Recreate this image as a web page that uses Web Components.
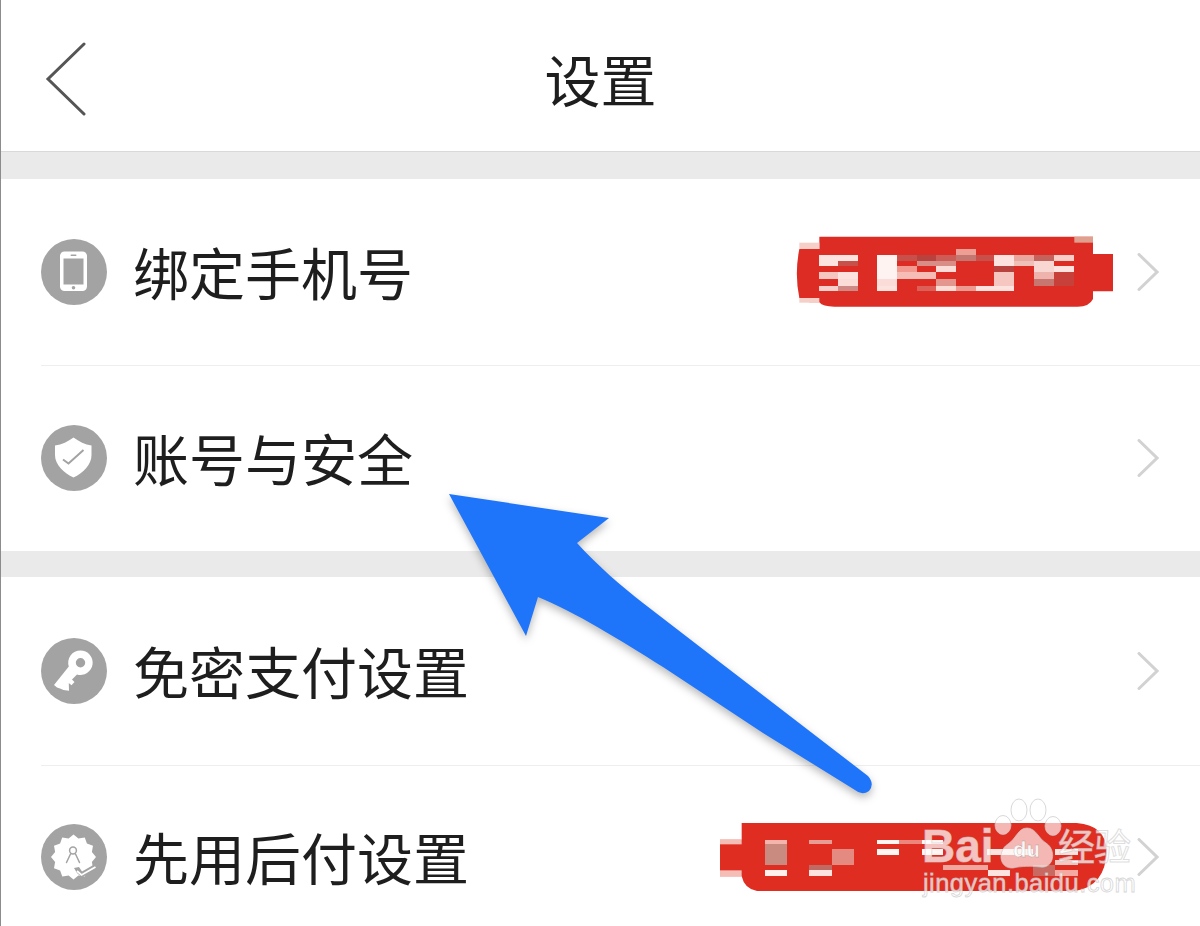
<!DOCTYPE html>
<html lang="zh">
<head>
<meta charset="utf-8">
<title>设置</title>
<style>
    html, body {
        margin: 0;
        padding: 0;
        background-color: #fff;
    }
</style>
</head>
<body>
<settings-page>
    <nav-bar title="设置"></nav-bar>
    <section-gap edge></section-gap>
    <setting-row icon="phone" divider h="187">绑定手机号<redact-block slot="value" kind="phone"></redact-block></setting-row>
    <setting-row icon="shield" h="185">账号与安全</setting-row>
    <section-gap></section-gap>
    <setting-row icon="key" divider h="189">免密支付设置</setting-row>
    <setting-row icon="badge" h="183">先用后付设置<redact-block slot="value" kind="name"></redact-block></setting-row>
    <blue-arrow></blue-arrow>
    <baidu-mark></baidu-mark>
</settings-page>

<script>
const FONT = `"Noto Sans CJK SC", "Noto Sans", sans-serif`;

class SettingsPage extends HTMLElement {
    constructor() {
        super();
        this.attachShadow({ mode: "open" }).innerHTML = `
            <style>
                :host {
                    display: block;
                    position: relative;
                    width: 1200px;
                    height: 926px;
                    box-sizing: border-box;
                    border-left: 1px solid #8c8c8c;
                    overflow: hidden;
                    background-color: #fff;
                    font-family: ${FONT};
                    color: #1e1e1e;
                }
            </style>
            <slot></slot>`;
    }
}

class NavBar extends HTMLElement {
    connectedCallback() {
        this.attachShadow({ mode: "open" }).innerHTML = `
            <style>
                :host {
                    display: grid;
                    grid-template-columns: 1fr auto 1fr;
                    align-items: center;
                    height: 151px;
                    padding-left: 44px;
                    padding-top: 6px;
                    box-sizing: border-box;
                }
                svg { display: block; }
                h1 {
                    margin: 0 0 2px;
                    font-size: 56px;
                    font-weight: 400;
                    line-height: 1;
                    position: relative;
                    left: -22px;
                }
            </style>
            <svg width="42" height="74" viewBox="0 0 42 74" fill="none" stroke="#555" stroke-width="3" stroke-linecap="round" stroke-linejoin="miter">
                <path d="M39 2 L3 37 L39 72"/>
            </svg>
            <h1>${this.getAttribute("title")}</h1>
            <span></span>`;
    }
}

class SectionGap extends HTMLElement {
    constructor() {
        super();
        this.attachShadow({ mode: "open" }).innerHTML = `
            <style>
                :host {
                    display: block;
                    height: 26px;
                    background-color: #ebeaeb;
                }
                :host([edge]) {
                    height: 28px;
                    box-sizing: border-box;
                    border-top: 1px solid #d9d9d9;
                }
            </style>`;
    }
}

// icons are on a 66 x 66 box, the circle fills it
const ICONS = {
    phone: `
        <rect x="19" y="12.5" width="27" height="39.5" rx="4.5" fill="#fff"/>
        <rect x="22.5" y="19.5" width="20" height="26" fill="#a3a3a3"/>
        <rect x="29.5" y="15.5" width="6" height="1.6" rx=".8" fill="#a3a3a3"/>
        <circle cx="32.5" cy="48.8" r="1.8" fill="#a3a3a3"/>`,
    shield: `
        <path d="M32.5 12.5 C38 16.5 44 19.5 50.5 20.5 L50.5 30 C50.5 40 42 48 32.5 52.5 C23 48 14 40 14 30 L14 20.5 C21 19.5 27 16.5 32.5 12.5 Z" fill="#fff"/>
        <path d="M22 34.5 L27.5 38.5 L42.5 25" fill="none" stroke="#a3a3a3" stroke-width="2"/>`,
    key: `
        <path fill-rule="evenodd" fill="#fff" d="M39.5 12.5 A12.2 12.2 0 1 1 36 36.4 L31 41.5 L33.5 44 L30.5 47.2 L27.8 45 L28 52.8 L22.5 52 L19 50.5 L16 49.5 L13 47 L27.8 28.5 A12.2 12.2 0 0 1 39.5 12.5 Z M39.5 20 A4.7 4.7 0 1 0 39.5 29.4 A4.7 4.7 0 1 0 39.5 20 Z"/>`,
    badge: `
        <polygon fill="#fff" points="${starPoints(32.5, 33, 22.5, 19, 12)}"/>
        <circle cx="32" cy="26.5" r="3.4" fill="none" stroke="#a3a3a3" stroke-width="1.5"/>
        <path d="M29.5 30 L25.5 38.5 M34.5 30 L38.5 38.5" fill="none" stroke="#a3a3a3" stroke-width="1.5" stroke-linecap="round"/>
        <path d="M33 44 L36 49 L41 53.5 L55 45 L54 40 L41 47.5 L38 43 Z" fill="#a3a3a3"/>
        <path d="M36 47 L40.5 51 L54.5 43" fill="none" stroke="#fff" stroke-width="1.8"/>`
};

function starPoints(cx, cy, outer, inner, count) {
    const pts = [];
    for (let i = 0; i < count * 2; i++) {
        const r = i % 2 ? inner : outer;
        const a = Math.PI * i / count - Math.PI / 2;
        pts.push(`${(cx + r * Math.cos(a)).toFixed(1)},${(cy + r * Math.sin(a)).toFixed(1)}`);
    }
    return pts.join(" ");
}

class SettingRow extends HTMLElement {
    connectedCallback() {
        this.attachShadow({ mode: "open" }).innerHTML = `
            <style>
                :host {
                    display: block;
                    height: ${this.getAttribute("h")}px;
                    padding-left: 40px;
                }
                .inner {
                    display: flex;
                    align-items: center;
                    height: 100%;
                    box-sizing: border-box;
                    padding-right: 41px;
                }
                :host([divider]) .inner { border-bottom: 1px solid #eeeeee; }
                :host(:not([divider])) .inner { padding-bottom: 1px; }
                .icon { display: block; flex: none; }
                .label {
                    margin-left: 26px;
                    margin-bottom: 2px;
                    font-size: 56px;
                    line-height: 1;
                    white-space: nowrap;
                    flex: 1;
                }
                .chevron { display: block; flex: none; }
            </style>
            <div class="inner">
                <svg class="icon" width="66" height="66" viewBox="0 0 66 66">
                    <circle cx="33" cy="33" r="33" fill="#a3a3a3"/>
                    ${ICONS[this.getAttribute("icon")]}
                </svg>
                <span class="label"><slot></slot></span>
                <slot name="value"></slot>
                <svg class="chevron" width="22" height="38" viewBox="0 0 22 38" fill="none" stroke="#d2d2d2" stroke-width="3" stroke-linecap="round">
                    <path d="M2 1.5 L20 19 L2 36.5"/>
                </svg>
            </div>`;
    }
}

// cell lists read off the picture, in 3x zoom units: x0, x1, y0, y1, colour
const REDACTIONS = {
    phone: {
        box: [45, 40, 955, 225],
        gap: 23,
        lift: 2,
        base: `
            <path d="M115 48 H936 V100 H996 V212 H936 V235 Q925 258 890 258 H160 Q125 258 115 245 H85 L55 232 Q40 160 55 85 H115 Z" fill="#dd2c24"/>
            <rect x="880" y="48" width="56" height="18" fill="#e0a090"/>
            <rect x="55" y="66" width="60" height="19" fill="#f6cfc8"/>
            <rect x="55" y="232" width="60" height="14" fill="#f6cfc8"/>`,
        cells: [
            [115, 230, 102, 120, "#fde3df"], [115, 172, 120, 137, "#fde3df"], [172, 230, 120, 137, "#c8504a"],
            [115, 172, 155, 175, "#f6c6c0"], [172, 230, 155, 175, "#fde3df"], [172, 230, 175, 195, "#fbdcd7"],
            [115, 172, 195, 212, "#f8d0cb"], [172, 230, 195, 212, "#d08a85"], [288, 348, 102, 175, "#fff3f1"],
            [288, 348, 175, 195, "#fcdcd8"], [288, 348, 195, 212, "#fde3df"], [348, 408, 102, 120, "#c8504a"],
            [408, 465, 102, 120, "#b8423e"], [465, 525, 102, 120, "#cc5c56"], [525, 585, 85, 102, "#ee9e95"],
            [525, 585, 102, 120, "#c47670"], [585, 640, 102, 120, "#c8504a"], [640, 700, 102, 137, "#fde3df"],
            [700, 760, 102, 120, "#e8a89f"], [700, 760, 120, 137, "#efc0b8"], [760, 820, 102, 120, "#c4625c"],
            [820, 878, 102, 120, "#f8cfc9"], [760, 820, 120, 155, "#f8d6d1"], [820, 878, 137, 155, "#fde3df"],
            [760, 820, 155, 175, "#eeb3ac"], [760, 820, 175, 195, "#c87670"], [348, 408, 137, 155, "#f29a90"],
            [348, 465, 155, 175, "#f6bdb6"], [408, 525, 120, 137, "#d88d86"], [465, 525, 137, 155, "#fbdcd7"],
            [465, 525, 175, 195, "#e2968e"], [408, 465, 195, 212, "#dd6058"], [465, 525, 195, 212, "#fbdcd7"],
            [525, 585, 195, 212, "#ec9b93"], [585, 700, 195, 212, "#fde3df"], [640, 700, 155, 195, "#f6c6c0"],
            [640, 700, 137, 155, "#b8423e"], [820, 878, 155, 195, "#c8403a"]
        ]
    },
    name: {
        box: [60, 128, 1160, 205],
        gap: 30,
        lift: 0,
        base: `
            <path d="M125 128 H1130 Q1220 135 1220 215 Q1215 320 1120 333 H185 Q135 333 125 288 H60 V178 H125 Z" fill="#df2d22"/>
            <rect x="60" y="178" width="65" height="14" fill="#f4bdb6"/>
            <rect x="60" y="270" width="65" height="18" fill="#f4bdb6"/>`,
        cells: [
            [195, 262, 178, 192, "#f6b5ac"], [195, 262, 192, 255, "#c98a80"], [195, 262, 270, 288, "#fff0ed"],
            [328, 396, 178, 192, "#e89d94"], [328, 396, 255, 270, "#c06a64"], [328, 396, 270, 288, "#fde3df"],
            [396, 462, 207, 255, "#e58a80"], [530, 597, 178, 192, "#fff5f3"], [530, 597, 207, 225, "#fff5f3"],
            [597, 665, 178, 192, "#ec857b"], [665, 730, 178, 192, "#fff5f3"], [665, 730, 207, 225, "#fff5f3"],
            [730, 865, 255, 270, "#f2a79e"], [865, 930, 270, 288, "#fde3df"], [860, 1000, 207, 225, "#fde3df"],
            [1000, 1065, 255, 288, "#c86a62"], [1065, 1135, 207, 225, "#fde3df"], [1065, 1135, 240, 255, "#f6c6c0"],
            [1065, 1135, 270, 288, "#f6a9a0"]
        ]
    }
};

class RedactBlock extends HTMLElement {
    connectedCallback() {
        const r = REDACTIONS[this.getAttribute("kind")];
        const [x, y, w, h] = r.box;
        const cells = r.cells.map(c =>
            `<rect x="${c[0]}" y="${c[2]}" width="${c[1] - c[0]}" height="${c[3] - c[2]}" fill="${c[4]}"/>`).join("");
        this.attachShadow({ mode: "open" }).innerHTML = `
            <style>
                :host {
                    display: block;
                    flex: none;
                    margin-right: ${r.gap}px;
                    margin-top: ${-r.lift}px;
                }
                svg { display: block; }
            </style>
            <svg width="${w / 3}" height="${h / 3}" viewBox="${x} ${y} ${w} ${h}" shape-rendering="crispEdges">
                <g shape-rendering="auto">${r.base}</g>
                ${cells}
            </svg>`;
    }
}

class BlueArrow extends HTMLElement {
    constructor() {
        super();
        this.attachShadow({ mode: "open" }).innerHTML = `
            <style>
                :host {
                    display: block;
                    position: absolute;
                    left: -1px;
                    top: 0;
                    pointer-events: none;
                }
                svg {
                    display: block;
                    filter: drop-shadow(0 4px 4px rgba(0, 0, 0, 0.28));
                }
            </style>
            <svg width="1200" height="926" viewBox="0 0 1200 926">
                <path d="M449 494 L609 518 L577 543 C598 566 620 585 643 603 L717 660 L868 776 Q875 784 869 791 Q862 796 855 790 L763 733 L663 667 C620 640 575 612 538 597 L526 636 Z" fill="#1f75fa"/>
            </svg>`;
    }
}

class BaiduMark extends HTMLElement {
    constructor() {
        super();
        this.attachShadow({ mode: "open" }).innerHTML = `
            <style>
                :host {
                    display: block;
                    position: absolute;
                    left: 921px;
                    top: 797px;
                    width: 216px;
                    height: 105px;
                    font-family: "Liberation Sans", sans-serif;
                    color: rgba(255, 255, 255, 0.72);
                    pointer-events: none;
                }
                .bai, .du, .jing, .site {
                    position: absolute;
                    line-height: 1;
                    white-space: nowrap;
                }
                .bai {
                    left: 0;
                    top: 31px;
                    height: 36px;
                    line-height: 36px;
                    font-size: 46px;
                    font-weight: 700;
                    -webkit-text-stroke: 1px rgba(205, 205, 205, 0.55);
                }
                .du {
                    left: 91px;
                    top: 42px;
                    font-size: 22px;
                    font-weight: 700;
                    color: rgba(255, 255, 255, 0.85);
                    -webkit-text-stroke: 0.4px rgba(120, 120, 120, 0.6);
                }
                .jing {
                    left: 136px;
                    top: 30px;
                    font-family: ${FONT};
                    font-size: 37px;
                    letter-spacing: -1px;
                    -webkit-text-stroke: 1px rgba(200, 200, 200, 0.6);
                }
                .site {
                    left: 1px;
                    top: 74px;
                    font-size: 25.5px;
                    letter-spacing: 0.45px;
                    -webkit-text-stroke: 0.8px rgba(200, 200, 200, 0.75);
                }
                svg { position: absolute; left: 71px; top: 0; }
            </style>
            <svg width="72" height="76" viewBox="0 0 72 76">
                <g fill="rgba(255,255,255,.66)" stroke="rgba(200,200,200,.7)" stroke-width="1">
                    <ellipse cx="26" cy="13" rx="8" ry="11"/>
                    <ellipse cx="45" cy="13" rx="8" ry="11"/>
                    <ellipse cx="10" cy="28" rx="8" ry="9.5"/>
                    <ellipse cx="60" cy="29" rx="8" ry="9.5"/>
                    <path d="M34 31 C43 31 45 41 53 46 C64 53 61 72 47 70 C40 69 28 69 20 71 C6 72 4 54 15 47 C23 42 25 31 34 31 Z"/>
                </g>
            </svg>
            <span class="bai">Bai</span>
            <span class="du">du</span>
            <span class="jing" lang="zh">经验</span>
            <span class="site">jingyan.baidu.com</span>`;
    }
}

customElements.define("settings-page", SettingsPage);
customElements.define("nav-bar", NavBar);
customElements.define("section-gap", SectionGap);
customElements.define("setting-row", SettingRow);
customElements.define("redact-block", RedactBlock);
customElements.define("blue-arrow", BlueArrow);
customElements.define("baidu-mark", BaiduMark);
</script>
</body>
</html>
